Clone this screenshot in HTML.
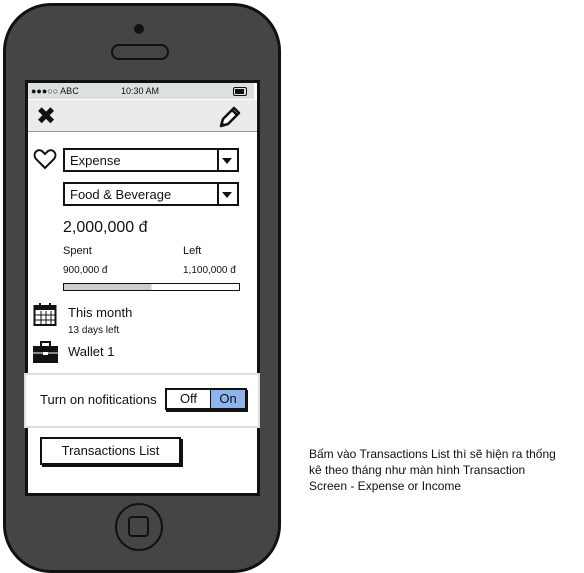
<!DOCTYPE html>
<html><head><style>
body{margin:0;width:584px;height:573px;background:#fff;position:relative;overflow:hidden;font-family:"Comic Sans MS","Liberation Sans",sans-serif;color:#111}
.a{position:absolute}
.phone{left:3px;top:3px;width:272px;height:564px;background:#454545;border:3px solid #111;border-radius:48px}
.screen{left:25px;top:80px;width:229px;height:410px;background:#fff;border:3px solid #111}
.dd{position:absolute;left:63px;width:176px;height:24px;border:2px solid #111;font-size:13px;line-height:22px;padding-left:5px;box-sizing:border-box;background:#fff}
.dd:after{content:"";position:absolute;right:0;top:0;width:18px;height:100%;border-left:2px solid #111}
.dd i{position:absolute;right:5px;top:8px;border:5px solid transparent;border-top:6px solid #111;z-index:2}
.t{position:absolute;font-size:11px}
</style></head><body>
<div class="a phone"></div>
<div class="a" style="left:134px;top:24px;width:10px;height:10px;border-radius:50%;background:#111"></div>
<div class="a" style="left:111px;top:44px;width:54px;height:12px;border-radius:8px;border:2px solid #111"></div>
<div class="a" style="left:115px;top:503px;width:44px;height:44px;border-radius:50%;border:2px solid #111"></div>
<div class="a" style="left:128px;top:516px;width:17px;height:17px;border-radius:4px;border:2px solid #111"></div>
<div class="a screen"></div>
<div class="a" style="left:28px;top:83px;width:226px;height:16px;background:#dde0e0;font-size:9px;line-height:16px">
<span class="a" style="left:3px">●●●○○ ABC</span><span class="a" style="left:93px">10:30 AM</span>
<span class="a" style="left:205px;top:4px;width:12px;height:7px;border:1px solid #111;border-radius:2px"><span class="a" style="left:1px;top:1px;width:9px;height:5px;background:#111"></span></span></div>
<div class="a" style="left:28px;top:100px;width:229px;height:31px;background:#ebebeb;border-bottom:1px solid #999"></div>
<div class="a" style="left:36px;top:100px;font-size:24px;font-weight:bold;line-height:32px;font-family:'DejaVu Sans'">✖</div>
<svg class="a" style="left:218px;top:105px" width="24" height="24"><path d="M3 21 L5 14 L16 3 L21 8 L10 19 Z" fill="#fff" stroke="#111" stroke-width="2.5" stroke-linejoin="round"/><path d="M14 5 L19 10" stroke="#111" stroke-width="2.5"/><path d="M3 21 L4 17 L7 20 Z" fill="#111"/></svg>
<svg class="a" style="left:33px;top:148px" width="24" height="22"><path d="M12 20 L3 11 C-1 6 4 0 9 3 L12 6 L15 3 C20 0 25 6 21 11 Z" fill="none" stroke="#111" stroke-width="2"/></svg>
<div class="dd" style="top:148px">Expense<i></i></div>
<div class="dd" style="top:182px">Food &amp; Beverage<i></i></div>
<div class="a" style="left:63px;top:219px;font-size:16px">2,000,000 đ</div>
<div class="t" style="left:63px;top:245px">Spent</div>
<div class="t" style="left:183px;top:245px">Left</div>
<div class="t" style="left:63px;top:265px;font-size:10px">900,000 đ</div>
<div class="t" style="left:183px;top:265px;font-size:10px">1,100,000 đ</div>
<div class="a" style="left:63px;top:283px;width:175px;height:6px;border:1.5px solid #111;background:linear-gradient(90deg,#ccc 50%,#fff 50%)"></div>
<svg class="a" style="left:33px;top:302px" width="24" height="24"><rect x="1.5" y="4" width="21" height="19" fill="none" stroke="#111" stroke-width="2"/><rect x="1.5" y="4" width="21" height="4" fill="#111"/><path d="M8 9v14M13 9v14M18 9v14M2 13h20M2 18h20" stroke="#111"/><path d="M7 1v5M17 1v5" stroke="#111" stroke-width="2"/></svg>
<div class="a" style="left:68px;top:305px;font-size:13px">This month</div>
<div class="t" style="left:68px;top:325px;font-size:10px">13 days left</div>
<svg class="a" style="left:33px;top:341px" width="25" height="22"><rect x="0" y="5" width="25" height="17" fill="#111"/><rect x="8" y="1" width="9" height="5" fill="none" stroke="#111" stroke-width="2"/><rect x="10" y="11" width="5" height="3" fill="#fff"/><path d="M0 12h25" stroke="#fff"/></svg>
<div class="a" style="left:68px;top:344px;font-size:13px">Wallet 1</div>
<div class="a" style="left:24px;top:373px;width:232px;height:51px;background:#fff;border:2px solid #ddd"></div>
<div class="a" style="left:40px;top:392px;font-size:13px">Turn on nofitications</div>
<div class="a" style="left:165px;top:388px;width:82px;height:22px;border:2px solid #111;box-sizing:border-box;font-size:13px;line-height:18px;box-shadow:1px 2px 0 #111">
<span class="a" style="left:0;width:43px;height:18px;text-align:center;border-right:1px solid #111">Off</span>
<span class="a" style="left:44px;width:34px;height:18px;text-align:center;background:#8fb3ec">On</span></div>
<div class="a" style="left:40px;top:437px;width:141px;height:28px;border:2px solid #111;box-sizing:border-box;background:#fff;font-size:13px;line-height:24px;text-align:center;box-shadow:2px 2px 0 #111">Transactions List</div>
<div class="a" style="left:309px;top:446px;font-size:12px;line-height:16px;white-space:nowrap">Bấm vào Transactions List thì sẽ hiện ra thống<br>kê theo tháng như màn hình Transaction<br>Screen - Expense or Income</div>
</body></html>
